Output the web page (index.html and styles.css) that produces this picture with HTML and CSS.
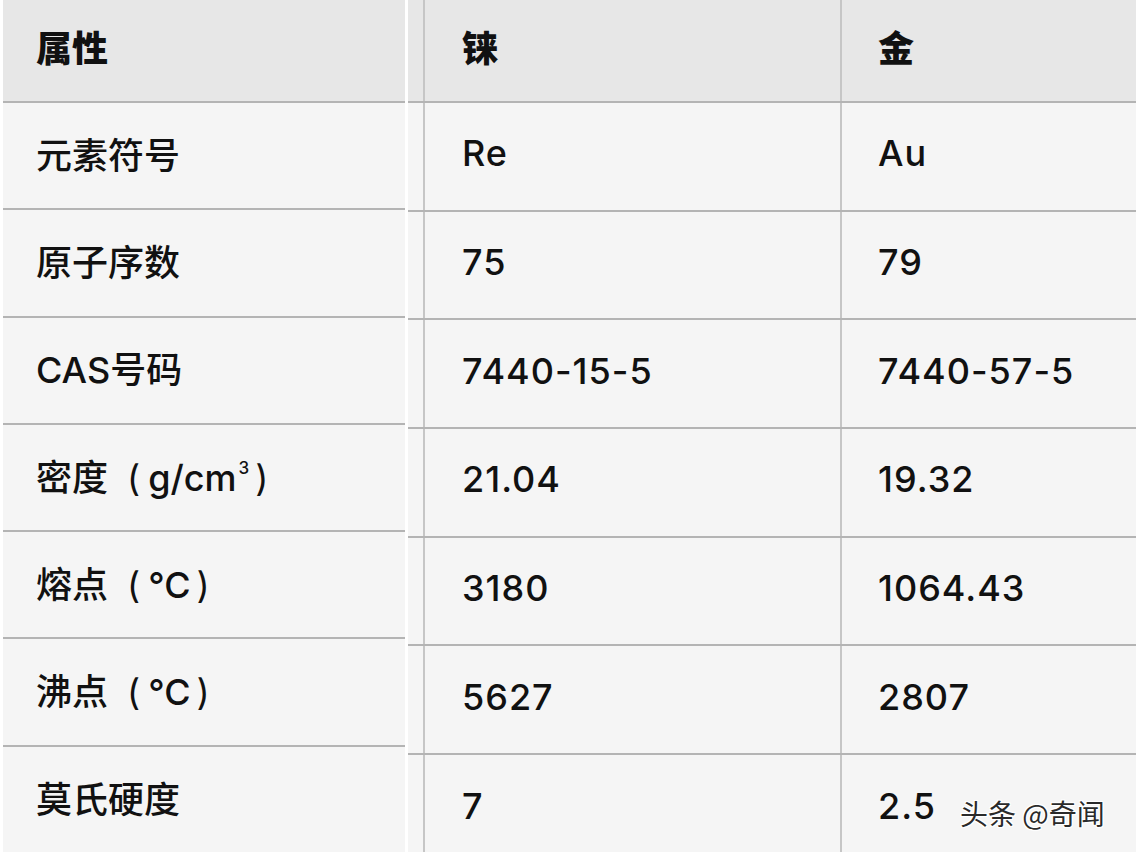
FILE: index.html
```html
<!DOCTYPE html>
<html lang="zh-CN">
<head>
<meta charset="utf-8">
<title>铼与金</title>
<link rel="stylesheet" href="styles.css">
</head>
<body>
<div class="page">
  <div class="panel panel-left">
    <div class="row head"><div class="cell">属性</div></div>
    <div class="row"><div class="cell">元素符号</div></div>
    <div class="row"><div class="cell">原子序数</div></div>
    <div class="row"><div class="cell">CAS号码</div></div>
    <div class="row"><div class="cell"><span class="txt">密度<span class="po">(</span>g/cm<sup>3</sup><span class="pc">)</span></span></div></div>
    <div class="row"><div class="cell"><span class="txt">熔点<span class="po">(</span>℃<span class="pc">)</span></span></div></div>
    <div class="row"><div class="cell"><span class="txt">沸点<span class="po">(</span>℃<span class="pc">)</span></span></div></div>
    <div class="row last"><div class="cell">莫氏硬度</div></div>
  </div>
  <div class="panel panel-right">
    <div class="row head"><div class="gutter"></div><div class="cell c1">铼</div><div class="cell c2">金</div></div>
    <div class="row"><div class="gutter"></div><div class="cell c1">Re</div><div class="cell c2">Au</div></div>
    <div class="row"><div class="gutter"></div><div class="cell c1">75</div><div class="cell c2">79</div></div>
    <div class="row"><div class="gutter"></div><div class="cell c1">7440-15-5</div><div class="cell c2">7440-57-5</div></div>
    <div class="row"><div class="gutter"></div><div class="cell c1">21.04</div><div class="cell c2">19.32</div></div>
    <div class="row"><div class="gutter"></div><div class="cell c1">3180</div><div class="cell c2">1064.43</div></div>
    <div class="row"><div class="gutter"></div><div class="cell c1">5627</div><div class="cell c2">2807</div></div>
    <div class="row last"><div class="gutter"></div><div class="cell c1">7</div><div class="cell c2">2.5</div></div>
  </div>
  <div class="watermark">头条 @奇闻</div>
</div>
</body>
</html>
```

FILE: styles.css
```css
html, body {
  margin: 0;
  padding: 0;
  background: #ffffff;
}

.page {
  position: relative;
  width: 1136px;
  height: 852px;
  overflow: hidden;
  display: flex;
  gap: 3px;
  padding-left: 3px;
  box-sizing: border-box;
  font-family: "Inter", "Noto Sans CJK SC", sans-serif;
  font-size: 36px;
  font-weight: 500;
  color: #111111;
}

.panel {
  display: flex;
  flex-direction: column;
  background: #f5f5f5;
}

.panel-left {
  width: 402px;
}

.panel-right {
  flex: 1;
}

.row {
  display: flex;
  box-sizing: border-box;
  border-bottom: 2px solid #b4b4b4;
  flex: none;
}

.panel-left .row {
  height: 107.3px;
}

.panel-right .row {
  height: 108.7px;
}

.panel .row.head {
  height: 103px;
  background: #e7e7e7;
  font-weight: 900;
}

.row.last {
  border-bottom: none;
}

.cell {
  display: flex;
  align-items: center;
  box-sizing: border-box;
  padding-bottom: 6px;
  white-space: nowrap;
}

.row.head .cell {
  padding-bottom: 10px;
}

.panel-left .cell {
  padding-left: 33px;
}

.gutter {
  width: 15px;
  flex: none;
}

.c1 {
  width: 417px;
  flex: none;
  border-left: 2px solid #c6c6c6;
  padding-left: 37px;
  letter-spacing: 1px;
}

.c2 {
  flex: 1;
  border-left: 2px solid #c6c6c6;
  padding-left: 36px;
  letter-spacing: 1px;
}

.txt {
  display: inline-block;
}

.po {
  font-weight: 400;
  margin: 0 8px 0 19px;
}

.pc {
  font-weight: 400;
  margin-left: 6px;
}

sup {
  font-size: 17px;
  line-height: 0;
  vertical-align: 17px;
  margin-left: 2px;
}

.watermark {
  position: absolute;
  left: 960px;
  top: 793px;
  font-family: "Noto Sans CJK SC", sans-serif;
  font-size: 28px;
  font-weight: 400;
  color: #2a2a2a;
  text-shadow: 1px 1px 0 #ffffff, -1px -1px 0 #ffffff, 1px -1px 0 #ffffff, -1px 1px 0 #ffffff, 0 0 3px #ffffff;
}
```
